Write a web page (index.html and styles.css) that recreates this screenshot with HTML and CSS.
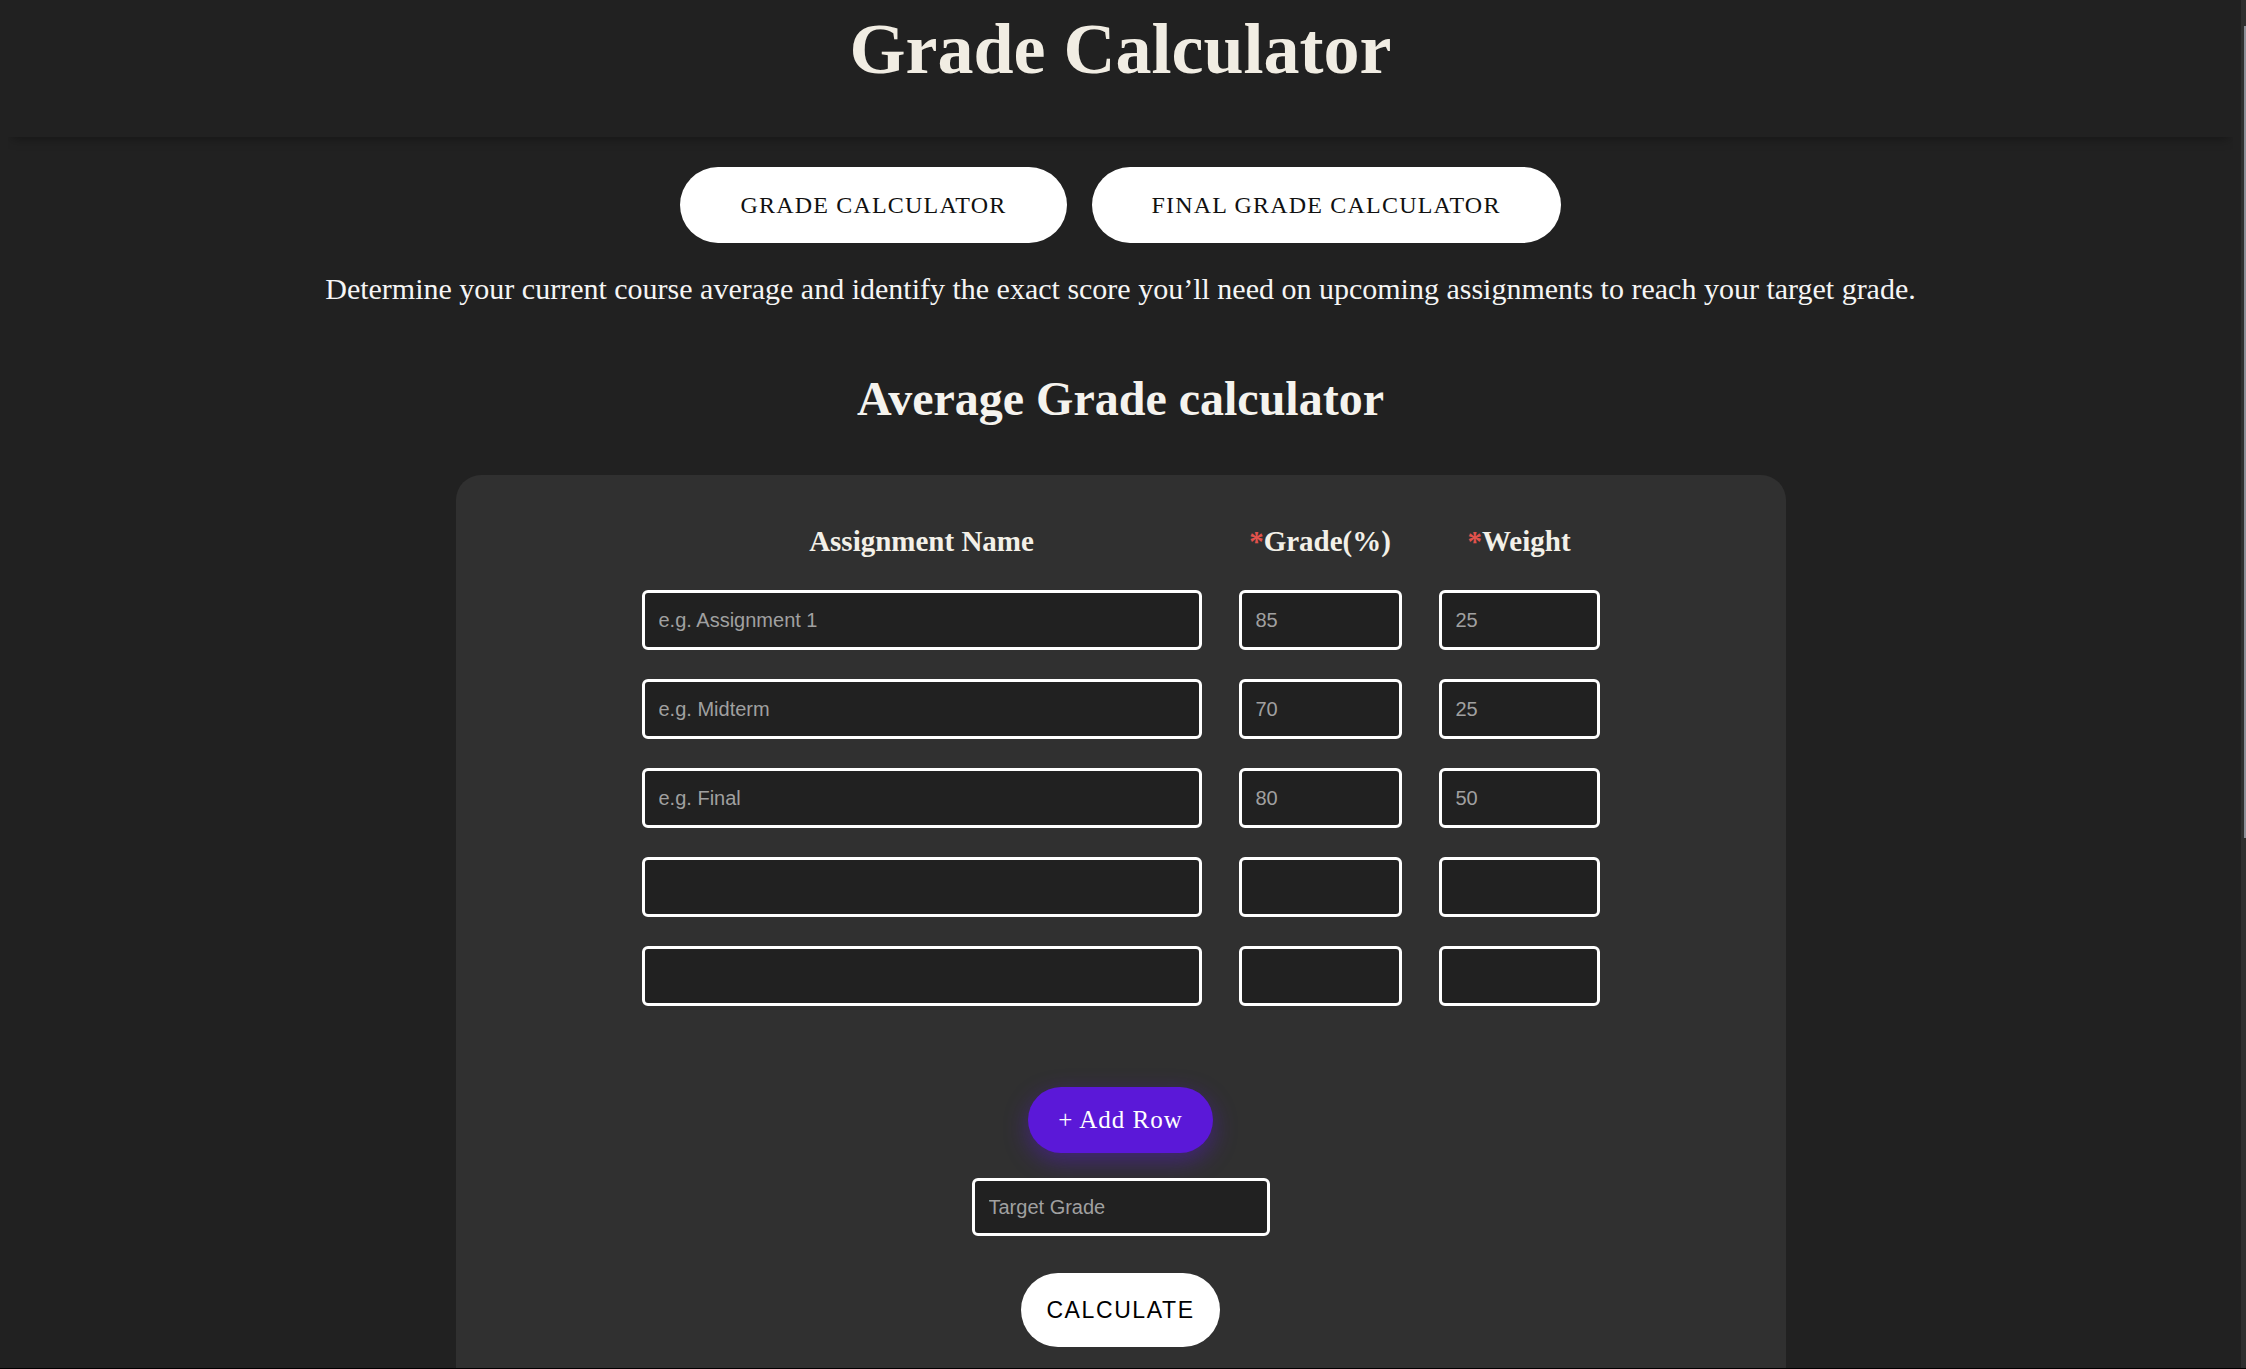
FILE: index.html
```html
<!DOCTYPE html>
<html lang="en">
<head>
<meta charset="utf-8">
<title>Grade Calculator</title>
<link rel="stylesheet" href="styles.css">
</head>
<body>
<header class="site-header">
  <h1 class="title">Grade Calculator</h1>
</header>
<main class="main">
  <nav class="tabs">
    <button class="tab">Grade Calculator</button>
    <button class="tab">Final Grade Calculator</button>
  </nav>
  <p class="intro">Determine your current course average and identify the exact score you’ll need on upcoming assignments to reach your target grade.</p>
  <h2 class="section-title">Average Grade calculator</h2>
  <section class="card">
    <div class="grade-table">
      <div class="th">Assignment Name</div>
      <div class="th"><span class="req">*</span>Grade(%)</div>
      <div class="th"><span class="req">*</span>Weight</div>

      <input class="field" type="text" placeholder="e.g. Assignment 1">
      <input class="field" type="text" placeholder="85">
      <input class="field" type="text" placeholder="25">

      <input class="field" type="text" placeholder="e.g. Midterm">
      <input class="field" type="text" placeholder="70">
      <input class="field" type="text" placeholder="25">

      <input class="field" type="text" placeholder="e.g. Final">
      <input class="field" type="text" placeholder="80">
      <input class="field" type="text" placeholder="50">

      <input class="field" type="text">
      <input class="field" type="text">
      <input class="field" type="text">

      <input class="field" type="text">
      <input class="field" type="text">
      <input class="field" type="text">
    </div>
    <button class="add-row">+ Add Row</button>
    <input class="field target" type="text" placeholder="Target Grade">
    <button class="calc">CALCULATE</button>
  </section>
</main>
<div class="scrollbar"><div class="scrollbar-thumb"></div></div>
<div class="frame-edge"></div>
</body>
</html>
```
FILE: styles.css
```css
html {
  background: #212121;
}

body {
  margin: 8px 13px 8px 8px;
  background: #212121;
  font-family: "Liberation Serif", "Times New Roman", serif;
  color: #f4f4f4;
}

.site-header {
  height: 129px;
  box-shadow: 0 6px 10px -4px rgba(0, 0, 0, 0.35);
}

.title {
  margin: 0;
  font-size: 72px;
  font-weight: 700;
  line-height: normal;
  text-align: center;
  color: #f1ede3;
}

.main {
  display: flex;
  flex-direction: column;
  align-items: center;
}

.tabs {
  display: flex;
  gap: 25px;
  margin-top: 30px;
}

.tab {
  height: 76px;
  padding: 0 60px;
  border: none;
  border-radius: 38px;
  background: #ffffff;
  color: #111111;
  font-family: "Liberation Serif", "Times New Roman", serif;
  font-size: 24px;
  letter-spacing: 1.2px;
  text-transform: uppercase;
}

.intro {
  margin: 29px 0 0;
  font-size: 30px;
  line-height: normal;
  text-align: center;
  color: #f5f5f5;
}

.section-title {
  margin: 65px 0 0;
  font-size: 48px;
  font-weight: 700;
  line-height: normal;
  color: #f5f3ee;
}

.card {
  box-sizing: border-box;
  width: 1330px;
  margin-top: 49px;
  padding: 50px 0 120px;
  background: #303030;
  border-radius: 25px;
  display: flex;
  flex-direction: column;
  align-items: center;
}

.grade-table {
  display: grid;
  grid-template-columns: 560px 163px 161px;
  column-gap: 37px;
  row-gap: 29px;
}

.th {
  font-size: 29px;
  font-weight: 700;
  line-height: 32px;
  text-align: center;
  color: #f3f0e8;
  margin-bottom: 4px;
}

.req {
  color: #e0524c;
}

.field {
  box-sizing: border-box;
  height: 60px;
  width: 100%;
  padding: 0 14px;
  border: 3px solid #ffffff;
  border-radius: 6px;
  background: #212121;
  color: #e0e0e0;
  font-family: "Liberation Sans", Arial, sans-serif;
  font-size: 20px;
  outline: none;
}

.field::placeholder {
  color: #a0a0a0;
}

.add-row {
  margin-top: 81px;
  width: 185px;
  height: 66px;
  border: none;
  border-radius: 33px;
  background: #5b18d8;
  color: #ffffff;
  font-family: "Liberation Serif", "Times New Roman", serif;
  font-size: 25px;
  letter-spacing: 1px;
  box-shadow: 0 8px 24px rgba(91, 24, 216, 0.45);
}

.target {
  margin-top: 25px;
  width: 298px;
  height: 58px;
}

.calc {
  margin-top: 37px;
  width: 199px;
  height: 74px;
  border: none;
  border-radius: 37px;
  background: #ffffff;
  color: #000000;
  font-family: "Liberation Sans", Arial, sans-serif;
  font-size: 23px;
  letter-spacing: 1.6px;
}

.scrollbar {
  position: fixed;
  top: 0;
  right: 0;
  width: 5px;
  height: 100vh;
  background: #2f2f2f;
}

.scrollbar-thumb {
  position: absolute;
  top: 26px;
  right: 0;
  width: 2px;
  height: 812px;
  background: #8b8e96;
}

.frame-edge {
  position: fixed;
  left: 0;
  right: 0;
  bottom: 0;
  height: 1px;
  background: #000000;
}
```
